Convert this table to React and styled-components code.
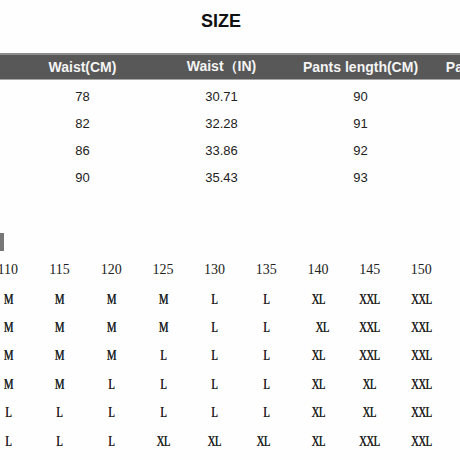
import React from 'react';
import styled, { createGlobalStyle } from 'styled-components';

const GlobalStyle = createGlobalStyle`
    html, body {
        margin: 0;
        padding: 0;
        background: #ffffff;
    }
`;

const Page = styled.div`
    width: 460px;
    height: 460px;
    overflow: hidden;
    display: flex;
    flex-direction: column;
    background: #fefefe;
`;

const Title = styled.h1`
    margin: 0;
    height: 53px;
    box-sizing: border-box;
    padding: 11px 18px 0 0;
    text-align: center;
    font: bold 18px/20px 'Liberation Sans', Arial, sans-serif;
    color: #111;
`;

const SizeTable = styled.div`
    margin-left: 13px;
    display: grid;
    grid-template-columns: repeat(4, 139px);
    width: max-content;
`;

const HeadBar = styled.div`
    margin-left: -13px;
    padding-left: 13px;
    width: 460px;
    height: 27px;
    box-sizing: border-box;
    background: #585858;
    border-top: 2px solid #8c8c8c;
    border-bottom: 1px solid #a5a5a5;
    display: grid;
    grid-template-columns: repeat(4, 139px);
    align-items: center;
`;

const HeadCell = styled.div`
    text-align: center;
    white-space: nowrap;
    font: bold 14px 'Liberation Sans', Arial, sans-serif;
    color: #f4f4f4;
`;

const Body = styled.div`
    padding-top: 3px;
`;

const Row = styled.div`
    display: grid;
    grid-template-columns: repeat(3, 139px);
    height: 27px;
    align-items: center;
`;

const Cell = styled.div`
    text-align: center;
    font: 13px 'Liberation Sans', Arial, sans-serif;
    color: #222;
`;

const Marker = styled.div`
    margin-top: 42px;
    width: 4px;
    height: 18px;
    background: #777;
`;

const ChartGrid = styled.div`
    margin-top: 5px;
    margin-left: -18px;
    display: grid;
    grid-template-columns: repeat(9, 51.7px);
    grid-auto-rows: 28.4px;
    align-items: center;
`;

const HeightCell = styled.div`
    text-align: center;
    font: 14px 'Liberation Serif', 'Times New Roman', serif;
    color: #222;
`;

const SizeCell = styled.div`
    text-align: center;
    color: #222;
    span {
        display: inline-block;
        font: 15px 'Liberation Serif', 'Times New Roman', serif;
        letter-spacing: -0.8px;
        transform: scaleX(0.72);
        text-shadow: 0.3px 0 0 #222;
        margin-left: ${props => props.shift || 0}px;
    }
`;

const heads = ['Waist(CM)', 'Waist（IN)', 'Pants length(CM)', 'Pants length(IN)'];

const rows = [
    ['78', '30.71', '90'],
    ['82', '32.28', '91'],
    ['86', '33.86', '92'],
    ['90', '35.43', '93'],
];

const heights = ['110', '115', '120', '125', '130', '135', '140', '145', '150'];

const chart = [
    ['M', 'M', 'M', 'M', 'L', 'L', 'XL', 'XXL', 'XXL'],
    ['M', 'M', 'M', 'M', 'L', 'L', ' XL', 'XXL', 'XXL'],
    ['M', 'M', 'M', 'L', 'L', 'L', 'XL', 'XXL', 'XXL'],
    ['M', 'M', 'L', 'L', 'L', 'L', 'XL', 'XL', 'XXL'],
    ['L', 'L', 'L', 'L', 'L', 'L', 'XL', 'XL', 'XXL'],
    ['L', 'L', 'L', 'XL', 'XL', '<XL', 'XL', 'XXL', 'XXL'],
];

export default function App() {
    return (
        <Page>
            <GlobalStyle />
            <Title>SIZE</Title>
            <SizeTable>
                <HeadBar style={{ gridColumn: '1 / -1' }}>
                    {heads.map(h => <HeadCell key={h}>{h}</HeadCell>)}
                </HeadBar>
                <Body style={{ gridColumn: '1 / -1' }}>
                    {rows.map(r => (
                        <Row key={r[0]}>
                            {r.map((v, i) => <Cell key={i}>{v}</Cell>)}
                        </Row>
                    ))}
                </Body>
            </SizeTable>
            <Marker />
            <ChartGrid>
                {heights.map(h => <HeightCell key={h}>{h}</HeightCell>)}
                {chart.map((r, ri) => r.map((v, ci) => {
                    // leading space / < marks a cell that sits a bit off-centre in the original
                    const shift = v[0] === ' ' ? 8 : v[0] === '<' ? -6 : 0;
                    return (
                        <SizeCell key={ri + '-' + ci} shift={shift}>
                            <span>{v.trim().replace('<', '')}</span>
                        </SizeCell>
                    );
                }))}
            </ChartGrid>
        </Page>
    );
}
